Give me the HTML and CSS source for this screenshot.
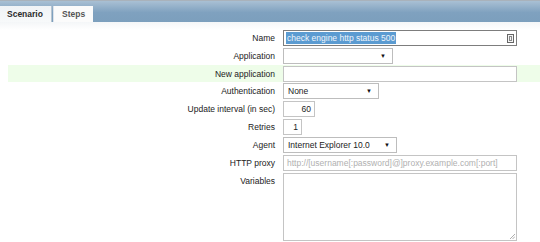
FILE: index.html
```html
<!DOCTYPE html>
<html lang="en">
<head>
<meta charset="UTF-8">
<title>Scenario</title>
<link rel="stylesheet" href="styles.css">
</head>
<body>

<div class="tabs-bar">
  <div class="tab tab-active">Scenario</div>
  <div class="tab">Steps</div>
</div>

<div class="form">
  <div class="row">
    <label class="label">Name</label>
    <div class="field">
      <div class="input input-wide input-focus">
        <span class="selected-text">check engine http status 500</span>
        <svg class="key-icon" width="7" height="9" viewBox="0 0 7 9">
          <rect x="0.5" y="0.5" width="6" height="8" fill="#f4f4f4" stroke="#666"/>
          <rect x="2.5" y="2.5" width="2" height="4" fill="none" stroke="#888"/>
        </svg>
      </div>
    </div>
  </div>

  <div class="row">
    <label class="label">Application</label>
    <div class="field">
      <div class="select select-app"><span></span><span class="arrow">&#9660;</span></div>
    </div>
  </div>

  <div class="row row-new">
    <label class="label">New application</label>
    <div class="field">
      <div class="input input-wide"></div>
    </div>
  </div>

  <div class="row">
    <label class="label">Authentication</label>
    <div class="field">
      <div class="select select-auth"><span>None</span><span class="arrow">&#9660;</span></div>
    </div>
  </div>

  <div class="row">
    <label class="label">Update interval (in sec)</label>
    <div class="field">
      <div class="input input-num input-delay">60</div>
    </div>
  </div>

  <div class="row">
    <label class="label">Retries</label>
    <div class="field">
      <div class="input input-num input-retries">1</div>
    </div>
  </div>

  <div class="row">
    <label class="label">Agent</label>
    <div class="field">
      <div class="select select-agent"><span>Internet Explorer 10.0</span><span class="arrow">&#9660;</span></div>
    </div>
  </div>

  <div class="row">
    <label class="label">HTTP proxy</label>
    <div class="field">
      <div class="input input-wide placeholder">http://[username[:password]@]proxy.example.com[:port]</div>
    </div>
  </div>

  <div class="row row-top">
    <label class="label">Variables</label>
    <div class="field">
      <div class="textarea">
        <svg class="grip" width="6" height="6" viewBox="0 0 6 6">
          <path d="M1 6 L6 1 M3.5 6 L6 3.5" stroke="#999" stroke-width="0.8"/>
        </svg>
      </div>
    </div>
  </div>
</div>

</body>
</html>
```

FILE: styles.css
```css
body {
  margin: 0;
  font-family: "Liberation Sans", Arial, sans-serif;
  font-size: 8.5px;
  color: #222;
  background-color: #fff;
  overflow: hidden;
}

/* barra de pestañas */
.tabs-bar {
  display: flex;
  align-items: flex-end;
  height: 21px;
  border-top: 1px solid #a9b2bb;
  background: linear-gradient(to bottom, #a9c0d4 0%, #7fa1bf 55%, #7c9fbd 100%);
}

.tab {
  height: 16px;
  line-height: 16px;
  padding: 0 8px;
  font-weight: bold;
  color: #555;
  background-color: #fbfbfb;
  border-left: 1px solid #dde3ea;
  margin-left: 1px;
}

.tab-active {
  margin-left: 0;
  padding: 0 8px 0 7px;
  width: 36px;
  color: #2b2b2b;
  border-left: none;
  border-right: 1px solid #b7c4d0;
  background: linear-gradient(to bottom, #f0f3f6, #f7f9fa);
}

/* formulario */
.form {
  padding-top: 7px;
  background: linear-gradient(to bottom, #f4f6f8 0px, #fff 8px);
}

.row {
  display: grid;
  grid-template-columns: 275px 1fr;
  column-gap: 8px;
  align-items: center;
  height: 18px;
}

.row-new {
  height: 17px;
  margin-left: 8px;
  grid-template-columns: 267px 1fr;
  background-color: #eefde9;
}

.row-top {
  align-items: start;
  height: auto;
}

.label {
  text-align: right;
  color: #222;
}

.row-top .label {
  padding-top: 4px;
}

.input,
.select {
  box-sizing: border-box;
  height: 16px;
  line-height: 14px;
  border: 1px solid #c4c4c4;
  background-color: #fff;
  padding: 0 4px;
  white-space: nowrap;
  overflow: hidden;
}

.input-wide {
  width: 234px;
}

.input-focus {
  display: flex;
  align-items: center;
  justify-content: space-between;
  border-color: #7d7d7d;
  padding: 0 2px 0 2px;
}

.selected-text {
  background-color: #5b9bd1;
  color: #eef4fa;
  line-height: 12px;
  padding: 0 1px;
}

.key-icon {
  display: block;
}

.input-num {
  text-align: right;
  padding-right: 3px;
}

.input-delay {
  width: 32px;
}

.input-retries {
  width: 19px;
}

.placeholder {
  color: #b0b0b0;
  padding-left: 3px;
}

.select {
  display: flex;
  justify-content: space-between;
  align-items: center;
  border-color: #bdbdbd;
  color: #222;
}

.select-app {
  width: 110px;
}

.select-auth {
  width: 96px;
}

.select-agent {
  width: 114px;
}

.arrow {
  font-size: 6px;
  color: #111;
  padding-right: 2px;
}

.textarea {
  position: relative;
  box-sizing: border-box;
  width: 234px;
  height: 68px;
  margin-top: 1px;
  border: 1px solid #c4c4c4;
  background-color: #fff;
}

.grip {
  position: absolute;
  right: 1px;
  bottom: 1px;
}
```
